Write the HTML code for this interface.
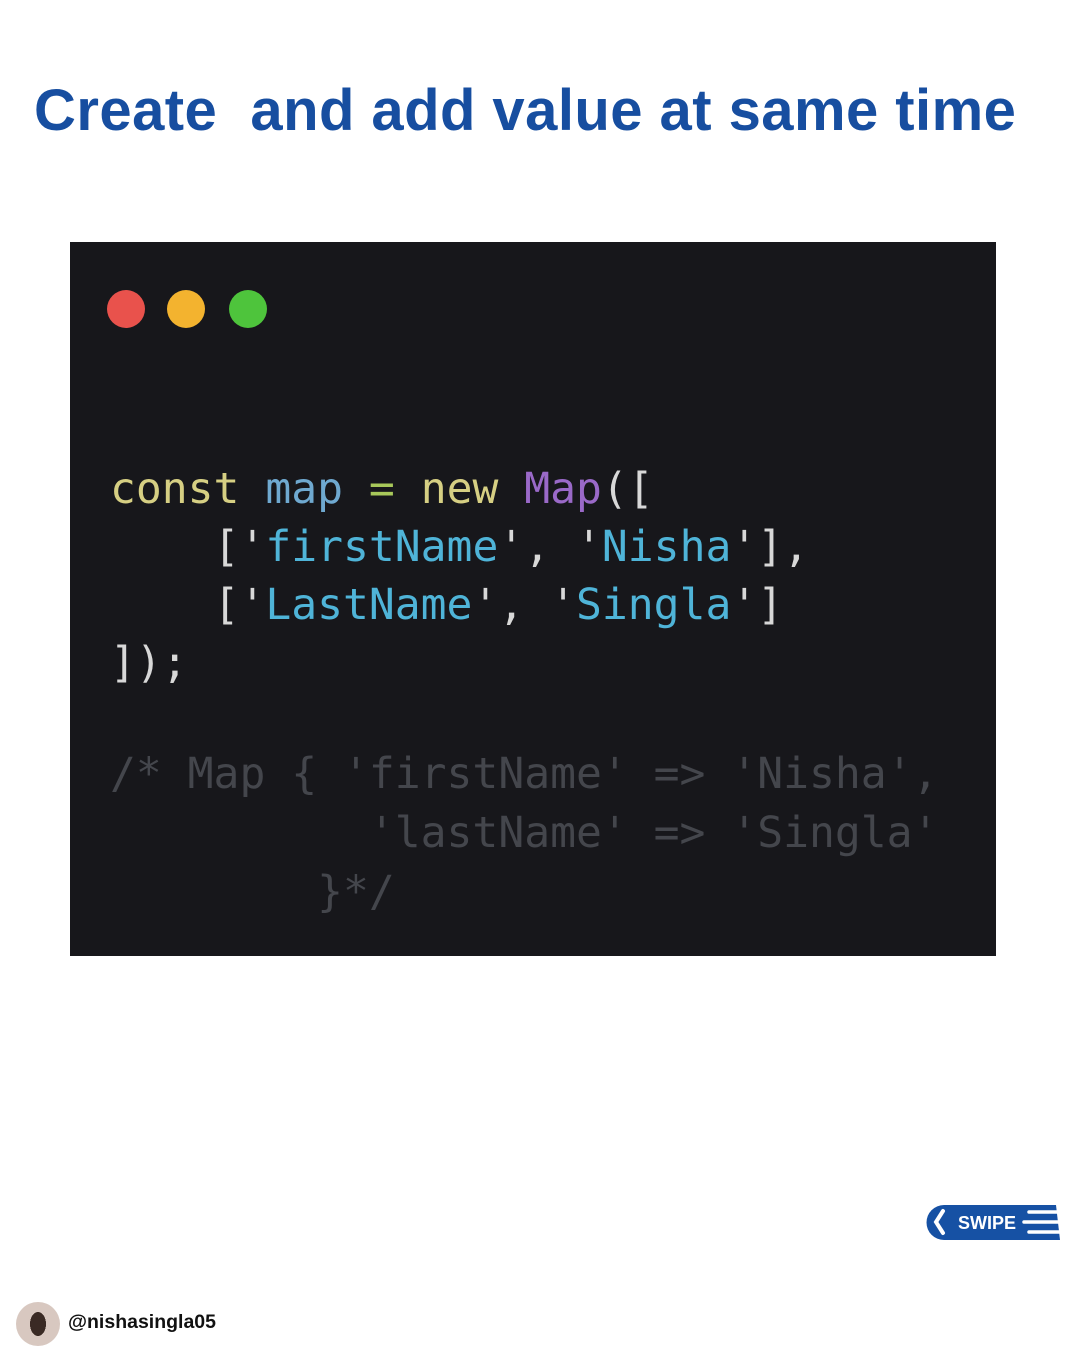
<!DOCTYPE html>
<html><head><meta charset="utf-8"><style>
body{margin:0;width:1080px;height:1350px;background:#fff;position:relative;overflow:hidden;font-family:"Liberation Sans",sans-serif}
.t{position:absolute;left:34px;top:77px;font-size:58px;font-weight:bold;color:#174ea0;white-space:pre;letter-spacing:0.45px}
.box{position:absolute;left:70px;top:242px;width:926px;height:714px;background:#17171b}
.d{position:absolute;top:290px;width:38px;height:38px;border-radius:50%}
pre{position:absolute;left:110px;margin:0;font-family:"DejaVu Sans Mono","Liberation Mono",monospace;font-size:43px;line-height:58px;color:#d8d8d8}
.k{color:#d6cf83}.v{color:#6fa9d0}.s{color:#4fb4d8}.c{color:#9a69c8}.o{color:#a8c85a}
.h{position:absolute;left:68px;top:1311px;font-size:19.5px;font-weight:bold;color:#111}
</style></head><body>
<div class="t">Create  and add value at same time</div>
<div class="box"></div>
<div class="d" style="left:107px;background:#e9524c"></div>
<div class="d" style="left:167px;background:#f3b32f"></div>
<div class="d" style="left:229px;background:#4ec43c"></div>
<pre style="top:460px"><span class="k">const</span> <span class="v">map</span> <span class="o">=</span> <span class="k">new</span> <span class="c">Map</span>([
    ['<span class="s">firstName</span>', '<span class="s">Nisha</span>'],
    ['<span class="s">LastName</span>', '<span class="s">Singla</span>']
]);</pre>
<pre style="top:745px;line-height:59px;color:#44464c">/* Map { 'firstName' =&gt; 'Nisha',
          'lastName' =&gt; 'Singla'
        }*/</pre>
<svg style="position:absolute;left:926px;top:1202px" width="140" height="40" viewBox="0 0 140 40">
<path d="M18 3 H130 L134 38 H18 A17.5 17.5 0 0 1 18 3Z" fill="#1651a4"/>
<path d="M17 9 L10 20 L17 31" stroke="#fff" stroke-width="4" fill="none" stroke-linecap="round"/>
<text x="32" y="27" font-family="Liberation Sans" font-weight="bold" font-size="18" fill="#fff">SWIPE</text>
<path d="M103 10 H132 M98 20 H134 M103 30 H134" stroke="#fff" stroke-width="3.5" stroke-linecap="round"/>
</svg>
<div style="position:absolute;left:16px;top:1302px;width:44px;height:44px;border-radius:50%;background:radial-gradient(ellipse 30% 45% at 50% 50%,#3a2a24 0 60%,#d8c8c0 61%),#e0d6d0"></div>
<div class="h">@nishasingla05</div>
</body></html>
